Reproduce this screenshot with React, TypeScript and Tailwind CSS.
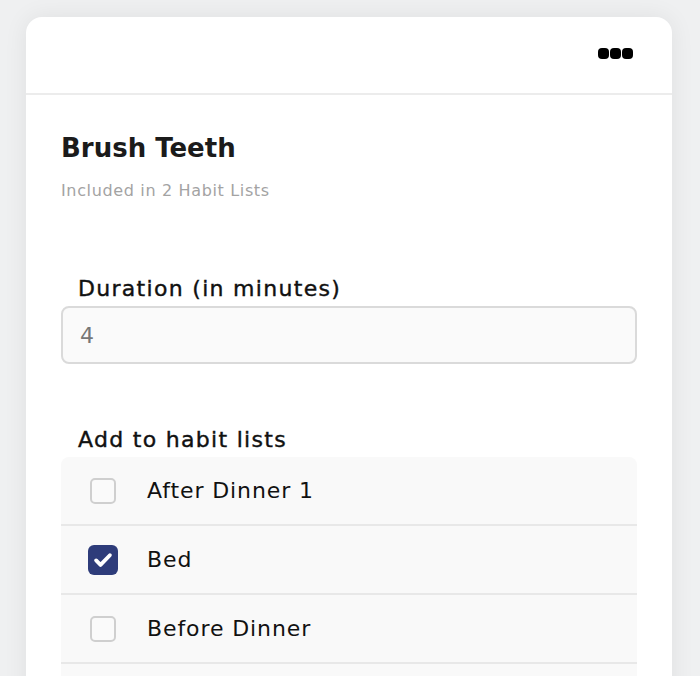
import React from "react";

const lists = [
  { name: "After Dinner 1", checked: false },
  { name: "Bed", checked: true },
  { name: "Before Dinner", checked: false },
];

function Checkbox({ checked }: { checked: boolean }) {
  if (checked) {
    return (
      <span className="flex h-[30px] w-[30px] items-center justify-center rounded-[6px] bg-[#2e3c7a]">
        <svg viewBox="0 0 24 24" className="h-[22px] w-[22px]" fill="none">
          <path d="M4.5 12.5l4.8 4.8L19.5 6.8" stroke="#fff" strokeWidth="4.2" strokeLinecap="round" strokeLinejoin="round" />
        </svg>
      </span>
    );
  }
  return <span className="mx-[2px] block h-[26px] w-[26px] rounded-[5px] border-2 border-[#cfcfcf] bg-[#fafafa]" />;
}

export default function App() {
  return (
    <div
      className="h-[676px] overflow-hidden bg-[#eff0f1] pt-[17px] pr-[28px] pl-[26px]"
      style={{ fontFamily: '"DejaVu Sans", "Noto Sans", sans-serif' }}
    >
      <div className="rounded-[16px] bg-white shadow-[0_0_24px_rgba(0,0,0,0.07)]">
        <div className="flex h-[78px] items-center justify-end border-b-2 border-[#ececec] pr-[39px] pb-[4px]">
          <div className="flex gap-[1px]">
            <span className="block h-[11px] w-[11px] rounded-[4px] bg-black" />
            <span className="block h-[11px] w-[11px] rounded-[4px] bg-black" />
            <span className="block h-[11px] w-[11px] rounded-[4px] bg-black" />
          </div>
        </div>

        <div className="px-[35px] pt-[38px] pb-[40px]">
          <h1 className="text-[26px] leading-[30px] font-bold text-[#1b1b1b]">Brush Teeth</h1>
          <p className="mt-[18px] text-[16px] leading-[20px] tracking-[0.65px] text-[#a3a3a3]">
            Included in 2 Habit Lists
          </p>

          <label className="mt-[75px] block pl-[17px] text-[22px] leading-[26px] tracking-[1.3px] text-[#111] [-webkit-text-stroke:0.4px_#111]">
            Duration (in minutes)
          </label>
          <div className="mt-[4px] flex h-[58px] items-center rounded-[8px] border-2 border-[#dadada] bg-[#fafafa] px-[17px] text-[22px] text-[#777]">
            4
          </div>

          <div className="mt-[63px] pl-[17px] text-[22px] leading-[26px] tracking-[1.3px] text-[#111] [-webkit-text-stroke:0.4px_#111]">
            Add to habit lists
          </div>
          <div className="mt-[4px] overflow-hidden rounded-t-[8px] bg-[#f9f9f9]">
            {lists.map((l) => (
              <div
                key={l.name}
                className="flex h-[69px] items-center gap-[29px] border-b-2 border-[#e8e8e8] pl-[27px] text-[22px] tracking-[0.9px] text-[#111]"
              >
                <Checkbox checked={l.checked} />
                <span>{l.name}</span>
              </div>
            ))}
            <div className="h-[69px]" />
          </div>
        </div>
      </div>
    </div>
  );
}
